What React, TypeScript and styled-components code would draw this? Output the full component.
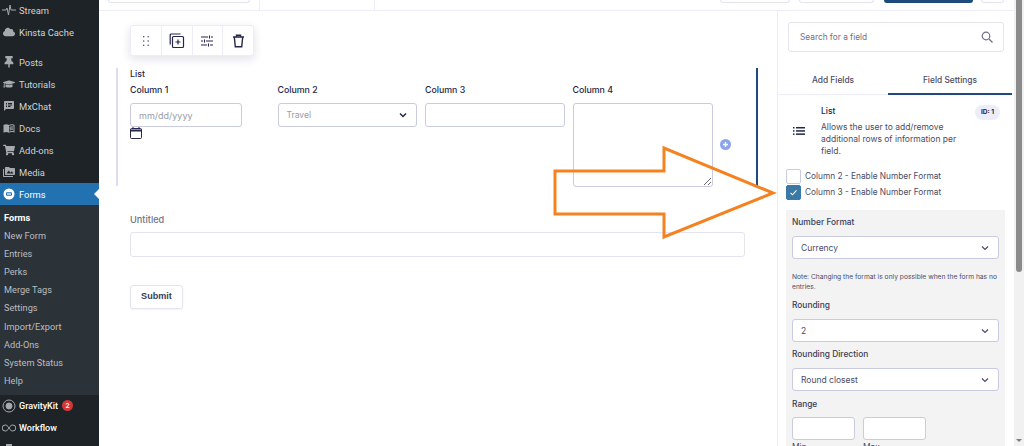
import React from "react";
import styled, {createGlobalStyle} from "styled-components";
import {FaThumbtack, FaGraduationCap, FaCloud, FaShoppingCart} from "react-icons/fa";
import {MdPermMedia, MdMenuBook, MdSpeakerNotes} from "react-icons/md";

const GlobalStyle = createGlobalStyle`
    html, body {
        margin: 0;
        height: 446px;
        overflow: hidden;
        background: #FFFFFF;
        font-family: "Inter", "Liberation Sans", sans-serif;
    }
    * { box-sizing: border-box; }
`;

const Page = styled.div`
    position: relative;
    display: flex;
    width: 1024px;
    height: 446px;
    overflow: hidden;
`;

/* ---------- admin menu ---------- */

const Sidebar = styled.nav`
    flex: 0 0 99px;
    height: 446px;
    background: #1D2327;
    overflow: hidden;
    font-family: "Roboto", sans-serif;
    font-size: 9.4px;
`;

const MenuGroup = styled.div`
    margin: -1px 0 8px;
`;

const MenuItem = styled.div<{$active?: boolean; $bright?: boolean}>`
    position: relative;
    display: flex;
    align-items: center;
    height: 22px;
    padding-left: 19px;
    color: ${({$active, $bright}) => $active || $bright ? '#FFFFFF' : '#D0D3D6'};
    background: ${({$active}) => $active ? '#2271B1' : 'transparent'};
    font-weight: ${({$bright}) => $bright ? 500 : 400};
    font-size: ${({$bright}) => $bright ? '9px' : 'inherit'};
    ${({$active}) => $active ? `
        &::after {
            content: '';
            position: absolute;
            right: 0;
            top: 6px;
            border: 5px solid transparent;
            border-right-color: #FFFFFF;
            border-left-width: 0;
        }
    ` : ''}
`;

const MenuIcon = styled.span`
    position: absolute;
    left: 2px;
    top: 0;
    width: 14px;
    height: 22px;
    display: flex;
    align-items: center;
    justify-content: center;
    color: #A7AAAD;
    font-size: 12px;
`;

const SubMenu = styled.div`
    padding: 4px 0 5px;
    background: #2C3338;
`;

const SubItem = styled.div<{$current?: boolean}>`
    height: 18.1px;
    line-height: 18px;
    padding-left: 4px;
    font-size: 9.2px;
    font-weight: ${({$current}) => $current ? 700 : 400};
    color: ${({$current}) => $current ? '#FFFFFF' : '#B9BDC0'};
`;

const Badge = styled.span`
    display: inline-flex;
    align-items: center;
    justify-content: center;
    width: 11px;
    height: 11px;
    margin-left: 4px;
    border-radius: 50%;
    background: #D63638;
    color: #FFFFFF;
    font-size: 7px;
`;

/* ---------- builder ---------- */

const Workspace = styled.div`
    flex: 0 0 915px;
    display: flex;
    flex-direction: column;
`;

const TopBar = styled.header`
    display: flex;
    justify-content: space-between;
    flex: 0 0 11px;
    border-bottom: 1px solid #ECEDF8;
    padding: 0 10px 0 9px;
`;

const TopGroup = styled.div`
    display: flex;
    height: 10px;
`;

const TopStub = styled.div<{$width: number; $gap?: number; $dark?: boolean}>`
    width: ${({$width}) => $width}px;
    height: 3px;
    margin-left: ${({$gap}) => $gap ?? 0}px;
    border: 1px solid ${({$dark}) => $dark ? '#1E4A7C' : '#E3E4F0'};
    border-top: none;
    border-radius: 0 0 3px 3px;
    background: ${({$dark}) => $dark ? '#1E4A7C' : '#FFFFFF'};
`;

const TopDivider = styled.div<{$gap: number}>`
    width: 1px;
    height: 10px;
    margin-left: ${({$gap}) => $gap}px;
    background: #ECEDF8;
`;

const Columns = styled.div`
    flex: 1;
    display: flex;
    min-height: 0;
`;

const Canvas = styled.main`
    flex: 0 0 678px;
    padding-top: 14px;
`;

const Toolbar = styled.div`
    display: flex;
    width: 124px;
    height: 31px;
    margin-left: 31px;
    border: 1px solid #ECEDF8;
    border-radius: 3px;
    background: #FFFFFF;
    box-shadow: 0 3px 10px rgba(40, 44, 100, 0.14);
`;

const ToolButton = styled.div`
    flex: 1;
    display: flex;
    align-items: center;
    justify-content: center;
    color: #242748;
    & + & { border-left: 1px solid #ECEDF8; }
`;

const ListField = styled.section`
    position: relative;
    width: 642px;
    height: 118px;
    margin: 12px 0 0 17px;
    padding-left: 12px;
    border-left: 2px solid #DCDEF0;
    border-right: 2px solid #1E4A7C;
`;

const FieldTitle = styled.div`
    height: 11px;
    line-height: 11px;
    font-size: 8.8px;
    font-weight: 500;
    color: #242748;
`;

const ColumnGrid = styled.div`
    display: grid;
    grid-template-columns: 139.5px 139.5px 139.5px 140px 20px;
    column-gap: 8px;
    margin-top: 5px;
`;

const ColumnCell = styled.div``;

const ColumnLabel = styled.label`
    display: block;
    height: 12px;
    margin-bottom: 7px;
    line-height: 12px;
    font-size: 8.8px;
    font-weight: 500;
    color: #242748;
`;

const TextBox = styled.input<{$width?: number; $height?: number}>`
    display: block;
    width: ${({$width}) => $width ? `${$width}px` : '100%'};
    height: ${({$height}) => $height ?? 24}px;
    padding: 0 8px;
    border: 1px solid #C9CBE0;
    border-radius: 3px;
    outline: none;
    background: #FFFFFF;
    font-family: inherit;
    font-size: 9px;
    color: #242748;
    &::placeholder { color: #9A9CA8; }
`;

const NoteArea = styled.textarea`
    display: block;
    width: 100%;
    height: 84px;
    border: 1px solid #C9CBE0;
    border-radius: 3px;
    outline: none;
    background: #FFFFFF;
    resize: both;
`;

const CalendarIcon = styled.div`
    display: flex;
    height: 12px;
`;

const AddCell = styled.div`
    align-self: end;
    margin: 0 0 37px -1px;
    display: flex;
`;

const SelectBox = styled.div<{$muted?: boolean; $height?: number}>`
    display: flex;
    align-items: center;
    justify-content: space-between;
    height: ${({$height}) => $height ?? 23}px;
    padding: 0 8px;
    border: 1px solid #C9CBE0;
    border-radius: 3px;
    background: #FFFFFF;
    font-size: 8.5px;
    color: ${({$muted}) => $muted ? '#9A9CA8' : '#4A4C66'};
`;

const PlainField = styled.section`
    width: 615px;
    margin: 27px 0 0 31px;
`;

const PlainLabel = styled.div`
    height: 13px;
    margin-bottom: 6px;
    line-height: 13px;
    font-size: 9.2px;
    font-weight: 500;
    color: #6F7186;
`;

const PlainInput = styled.div`
    height: 25px;
    border: 1px solid #E3E4F0;
    border-radius: 3px;
`;

const SubmitButton = styled.button`
    display: block;
    width: 53px;
    height: 24px;
    margin: 28px 0 0 31px;
    padding: 0 0 2px;
    border: 1px solid #E3E4F0;
    border-radius: 3px;
    background: #FFFFFF;
    font-family: "Liberation Sans", sans-serif;
    font-size: 9.1px;
    font-weight: 700;
    color: #3A3C58;
    box-shadow: 0 1px 2px rgba(40, 44, 100, 0.06);
`;

/* ---------- settings panel ---------- */

const Panel = styled.aside`
    flex: 0 0 237px;
    border-left: 1px solid #ECEDF8;
    overflow: hidden;
`;

const SearchBox = styled.div`
    display: flex;
    align-items: center;
    justify-content: space-between;
    width: 216px;
    height: 30px;
    margin: 11px 0 0 10px;
    padding: 0 10px 0 11px;
    border: 1px solid #E3E4F0;
    border-radius: 3px;
    font-size: 8.3px;
    color: #6F7186;
`;

const Tabs = styled.div`
    display: flex;
    height: 33px;
    margin-top: 10px;
    margin-right: 2px;
    border-bottom: 1px solid #ECEDF8;
`;

const Tab = styled.div<{$active?: boolean; $width: number}>`
    flex: 0 0 ${({$width}) => $width}px;
    margin-bottom: -1px;
    padding-top: 13px;
    text-align: center;
    font-size: 8.4px;
    font-weight: 500;
    color: #4A4C66;
    border-bottom: 2px solid ${({$active}) => $active ? '#1E4A7C' : 'transparent'};
`;

const FieldInfo = styled.div`
    display: flex;
    align-items: center;
    height: 61px;
    margin-top: 5px;
    padding: 0 0 0 15px;
`;

const FieldText = styled.div`
    width: 144px;
    margin-left: 16px;
    font-size: 8.5px;
    line-height: 12px;
    color: #4A4C66;
`;

const FieldName = styled.div`
    margin-bottom: 4px;
    color: #242748;
    font-weight: 500;
`;

const IdBadge = styled.span`
    align-self: flex-start;
    margin: 5px 0 0 10px;
    width: 25px;
    height: 15px;
    border-radius: 8px;
    background: #ECEDF8;
    font-size: 6.6px;
    font-weight: 700;
    line-height: 15px;
    text-align: center;
    color: #242748;
`;

const CheckList = styled.div`
    margin: 7px 0 0 8px;
`;

const CheckRow = styled.div`
    display: flex;
    align-items: center;
    height: 16px;
    font-size: 8.3px;
    color: #4A4C66;
`;

const CheckBox = styled.span<{$checked?: boolean}>`
    display: flex;
    align-items: center;
    justify-content: center;
    width: 15px;
    height: 15px;
    margin-right: 4px;
    border: 1px solid ${({$checked}) => $checked ? '#3A78A6' : '#C9CBE0'};
    border-radius: 2px;
    background: ${({$checked}) => $checked ? '#3A78A6' : '#FFFFFF'};
`;

const SettingsBlock = styled.div`
    width: 219px;
    height: 240px;
    margin: 10px 0 0 8px;
    padding: 6px;
    background: #F3F3F4;
`;

const SettingLabel = styled.div<{$top?: number}>`
    height: 12px;
    margin-top: ${({$top}) => $top ?? 0}px;
    margin-bottom: 8px;
    line-height: 12px;
    font-size: 8.4px;
    font-weight: 500;
    color: #3A3C58;
`;

const Note = styled.p`
    margin: 13px -2px 0 0;
    font-size: 6.7px;
    line-height: 10px;
    color: #4A4C66;
`;

const RangeRow = styled.div`
    display: flex;
    gap: 8px;
    margin-top: -1px;
`;

const RangeCell = styled.div`
    width: 63px;
`;

const RangeHint = styled.div`
    margin-top: 1px;
    font-size: 8.4px;
    line-height: 12px;
    color: #4A4C66;
`;

/* ---------- page scrollbar ---------- */

const ScrollTrack = styled.div`
    flex: 0 0 10px;
    display: flex;
    flex-direction: column;
    align-items: center;
    padding-bottom: 4px;
    background: #F1F1F1;
`;

const ScrollThumb = styled.div`
    width: 6px;
    height: 272px;
    border-radius: 0 0 3px 3px;
    background: #8A8A8A;
`;

const ScrollArrow = styled.div`
    margin-top: auto;
    border: 3px solid transparent;
    border-top: 3px solid #7E7E7E;
    border-bottom-width: 0;
`;

const ArrowOverlay = styled.svg`
    position: absolute;
    left: 0;
    top: 0;
    pointer-events: none;
`;

const Chevron = () => (
    <svg width="10" height="10" viewBox="0 0 10 10" fill="none" stroke="#4A4C66" strokeWidth="1.2">
        <path d="M2 3.5l3 3 3-3"/>
    </svg>
);

const menuTop = [
    {name: 'Posts', icon: <FaThumbtack/>},
    {name: 'Tutorials', icon: <FaGraduationCap/>},
    {name: 'MxChat', icon: <MdSpeakerNotes/>},
    {name: 'Docs', icon: <MdMenuBook/>},
    {name: 'Add-ons', icon: <FaShoppingCart/>},
    {name: 'Media', icon: <MdPermMedia/>},
];

const subItems = ['New Form', 'Entries', 'Perks', 'Merge Tags', 'Settings', 'Import/Export', 'Add-Ons', 'System Status', 'Help'];

const App = () => (
    <Page>
        <GlobalStyle/>
        <Sidebar>
            <MenuGroup>
                <MenuItem>
                    <MenuIcon>
                        <svg width="14" height="12" viewBox="0 0 14 12" fill="none" stroke="#A7AAAD" strokeWidth="1">
                            <path d="M0 6h4l1-2 1.5 7L8 1l1 5h5"/>
                        </svg>
                    </MenuIcon>
                    Stream
                </MenuItem>
                <MenuItem><MenuIcon><FaCloud/></MenuIcon>Kinsta Cache</MenuItem>
            </MenuGroup>
            {menuTop.map(item => (
                <MenuItem key={item.name}>
                    <MenuIcon>{item.icon}</MenuIcon>
                    {item.name}
                </MenuItem>
            ))}
            <MenuItem $active>
                <MenuIcon>
                    <svg width="12" height="12" viewBox="0 0 12 12">
                        <circle cx="6" cy="6" r="5.5" fill="#FFFFFF"/>
                        <rect x="3" y="4.2" width="6" height="3.6" rx="1" fill="#2271B1"/>
                        <rect x="4" y="5.4" width="4" height="1.2" fill="#FFFFFF"/>
                    </svg>
                </MenuIcon>
                Forms
            </MenuItem>
            <SubMenu>
                <SubItem $current>Forms</SubItem>
                {subItems.map(item => <SubItem key={item}>{item}</SubItem>)}
            </SubMenu>
            <MenuItem $bright>
                <MenuIcon>
                    <svg width="14" height="14" viewBox="0 0 14 14" fill="none" stroke="#A7AAAD">
                        <circle cx="7" cy="7" r="6"/>
                        <circle cx="7" cy="7" r="3" fill="#A7AAAD"/>
                    </svg>
                </MenuIcon>
                GravityKit<Badge>2</Badge>
            </MenuItem>
            <MenuItem $bright>
                <MenuIcon>
                    <svg width="14" height="8" viewBox="0 0 14 8" fill="none" stroke="#A7AAAD">
                        <path d="M7 4C5.5 1.5 4.5 1 3.2 1a3 3 0 0 0 0 6C4.5 7 5.5 6.5 7 4s2.5-3 3.8-3a3 3 0 0 1 0 6C9.5 7 8.5 6.5 7 4z"/>
                    </svg>
                </MenuIcon>
                Workflow
            </MenuItem>
            <MenuItem>
                <MenuIcon>
                    <svg width="10" height="12" viewBox="0 0 10 12" fill="#A7AAAD">
                        <rect x="2" y="0" width="6" height="12"/>
                    </svg>
                </MenuIcon>
            </MenuItem>
        </Sidebar>
        <Workspace>
            <TopBar>
                <TopGroup>
                    <TopStub $width={142}/>
                    <TopDivider $gap={9}/>
                    <TopDivider $gap={114}/>
                </TopGroup>
                <TopGroup>
                    <TopStub $width={70}/>
                    <TopStub $width={75} $gap={9}/>
                    <TopStub $width={89} $gap={10} $dark/>
                    <TopStub $width={23} $gap={8}/>
                </TopGroup>
            </TopBar>
            <Columns>
                <Canvas>
                    <Toolbar>
                        <ToolButton>
                            <svg width="8" height="12" viewBox="0 0 8 12" fill="#55576E">
                                <rect x="1" y="1" width="1.3" height="1.3"/>
                                <rect x="5.5" y="1" width="1.3" height="1.3"/>
                                <rect x="1" y="5.4" width="1.3" height="1.3"/>
                                <rect x="5.5" y="5.4" width="1.3" height="1.3"/>
                                <rect x="1" y="9.7" width="1.3" height="1.3"/>
                                <rect x="5.5" y="9.7" width="1.3" height="1.3"/>
                            </svg>
                        </ToolButton>
                        <ToolButton>
                            <svg width="16" height="16" viewBox="0 0 16 16" fill="none" stroke="#242748" strokeWidth="1.2">
                                <rect x="3.5" y="3.5" width="11" height="11" rx="1"/>
                                <path d="M1.2 11.5V2a1 1 0 0 1 1-1h9.3"/>
                                <path d="M9 6.5v5M6.5 9h5"/>
                            </svg>
                        </ToolButton>
                        <ToolButton>
                            <svg width="14" height="14" viewBox="0 0 14 14" fill="none" stroke="#242748" strokeWidth="1.1">
                                <path d="M1 3h7M11 3h2M1 7h2M6 7h7M1 11h6M10 11h3"/>
                                <path d="M9.5 1.5v3M4.5 5.5v3M8.5 9.5v3"/>
                            </svg>
                        </ToolButton>
                        <ToolButton>
                            <svg width="13" height="14" viewBox="0 0 13 14" fill="none" stroke="#242748" strokeWidth="1.4">
                                <path d="M1 3h11M4.5 3V1.2h4V3M2.3 3l1 9.8h6.4l1-9.8"/>
                            </svg>
                        </ToolButton>
                    </Toolbar>
                    <ListField>
                        <FieldTitle>List</FieldTitle>
                        <ColumnGrid>
                            <ColumnCell>
                                <ColumnLabel>Column 1</ColumnLabel>
                                <TextBox $width={112} placeholder="mm/dd/yyyy"/>
                                <CalendarIcon>
                                    <svg width="12" height="12" viewBox="0 0 12 12" fill="none" stroke="#242748">
                                        <rect x="0.5" y="1.5" width="11" height="10" rx="1"/>
                                        <path d="M0.5 3.5h11" strokeWidth="2"/>
                                        <path d="M3 0v2M9 0v2"/>
                                    </svg>
                                </CalendarIcon>
                            </ColumnCell>
                            <ColumnCell>
                                <ColumnLabel>Column 2</ColumnLabel>
                                <SelectBox $muted $height={24}>
                                    Travel
                                    <svg width="10" height="10" viewBox="0 0 10 10" fill="none" stroke="#242748" strokeWidth="1.5">
                                        <path d="M2 3.5l3 3 3-3"/>
                                    </svg>
                                </SelectBox>
                            </ColumnCell>
                            <ColumnCell>
                                <ColumnLabel>Column 3</ColumnLabel>
                                <TextBox/>
                            </ColumnCell>
                            <ColumnCell>
                                <ColumnLabel>Column 4</ColumnLabel>
                                <NoteArea/>
                            </ColumnCell>
                            <AddCell>
                                <svg width="11" height="11" viewBox="0 0 11 11">
                                    <circle cx="5.5" cy="5.5" r="5.5" fill="#8CA4EC"/>
                                    <path d="M5.5 3v5M3 5.5h5" stroke="#FFFFFF" strokeWidth="1.4"/>
                                </svg>
                            </AddCell>
                        </ColumnGrid>
                    </ListField>
                    <PlainField>
                        <PlainLabel>Untitled</PlainLabel>
                        <PlainInput/>
                    </PlainField>
                    <SubmitButton>Submit</SubmitButton>
                </Canvas>
                <Panel>
                    <SearchBox>
                        Search for a field
                        <svg width="12" height="12" viewBox="0 0 12 12" fill="none" stroke="#6F7186" strokeWidth="1.2">
                            <circle cx="5" cy="5" r="3.8"/>
                            <path d="M8 8l3.5 3.5"/>
                        </svg>
                    </SearchBox>
                    <Tabs>
                        <Tab $width={110}>Add Fields</Tab>
                        <Tab $width={124} $active>Field Settings</Tab>
                    </Tabs>
                    <FieldInfo>
                        <svg width="12" height="8" viewBox="0 0 12 8" fill="#242748">
                            <rect x="0" y="0" width="1.5" height="1.5"/>
                            <rect x="3" y="0" width="9" height="1.5"/>
                            <rect x="0" y="3.2" width="1.5" height="1.5"/>
                            <rect x="3" y="3.2" width="9" height="1.5"/>
                            <rect x="0" y="6.4" width="1.5" height="1.5"/>
                            <rect x="3" y="6.4" width="9" height="1.5"/>
                        </svg>
                        <FieldText>
                            <FieldName>List</FieldName>
                            Allows the user to add/remove additional rows of information per field.
                        </FieldText>
                        <IdBadge>ID: 1</IdBadge>
                    </FieldInfo>
                    <CheckList>
                        <CheckRow><CheckBox/>Column 2 - Enable Number Format</CheckRow>
                        <CheckRow>
                            <CheckBox $checked>
                                <svg width="9" height="9" viewBox="0 0 9 9" fill="none" stroke="#FFFFFF" strokeWidth="1.1">
                                    <path d="M1.5 4.8l2 2 4-4.5"/>
                                </svg>
                            </CheckBox>
                            Column 3 - Enable Number Format
                        </CheckRow>
                    </CheckList>
                    <SettingsBlock>
                        <SettingLabel>Number Format</SettingLabel>
                        <SelectBox>Currency<Chevron/></SelectBox>
                        <Note>Note: Changing the format is only possible when the form has no entries.</Note>
                        <SettingLabel $top={7}>Rounding</SettingLabel>
                        <SelectBox>2<Chevron/></SelectBox>
                        <SettingLabel $top={6}>Rounding Direction</SettingLabel>
                        <SelectBox>Round closest<Chevron/></SelectBox>
                        <SettingLabel $top={7}>Range</SettingLabel>
                        <RangeRow>
                            <RangeCell><TextBox $height={23}/><RangeHint>Min</RangeHint></RangeCell>
                            <RangeCell><TextBox $height={23}/><RangeHint>Max</RangeHint></RangeCell>
                        </RangeRow>
                    </SettingsBlock>
                </Panel>
            </Columns>
        </Workspace>
        <ScrollTrack>
            <ScrollThumb/>
            <ScrollArrow/>
        </ScrollTrack>
        <ArrowOverlay width="1024" height="446" viewBox="0 0 1024 446" fill="none">
            <path d="M555 171H664V148L773 193L664 237V214H555Z" stroke="#F58220" strokeWidth="3"/>
        </ArrowOverlay>
    </Page>
);

export default App;
